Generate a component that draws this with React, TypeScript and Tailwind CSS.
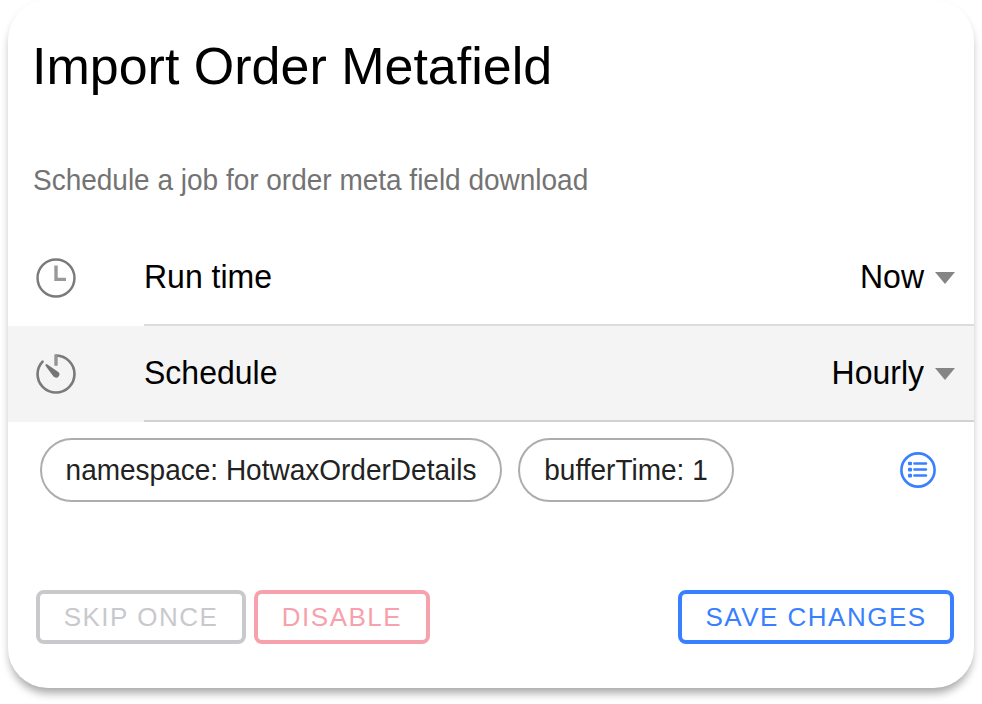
import React from "react";

function ClockIcon() {
  return (
    <svg viewBox="0 0 512 512" className="block h-12 w-12" fill="none" stroke="#7a7a7a" strokeWidth="26">
      <circle cx="256" cy="256" r="197" />
      <path d="M256 122v149h106" stroke="#999999" strokeWidth="36" />
    </svg>
  );
}

function TimerIcon() {
  return (
    <svg viewBox="0 0 512 512" className="block h-12 w-12" fill="none" stroke="#7a7a7a" strokeWidth="28" strokeLinecap="round" strokeLinejoin="round">
      <path d="M112.91 124A197 197 0 0059 256c0 109 88 197 197 197s197-88 197-197c0-107-86-194-193-197H256" />
      <path d="M256 50v118" stroke="#949494" strokeWidth="36" strokeLinecap="butt" />
      <path fill="#757575" stroke="none" d="M229 282L144 167a12 12 0 0116-16l117 81a32.5 32.5 0 01-39 56 33 33 0 01-9-6z" />
    </svg>
  );
}

function ListCircleIcon() {
  return (
    <svg viewBox="0 0 44 44" className="block h-[44px] w-[44px]" fill="none" stroke="#3880ff" strokeWidth="2.6">
      <circle cx="22" cy="22" r="16.6" />
      <path d="M18.4 15.5h11.6M18.4 21.6h11.6M18.4 27.6h11.6" strokeLinecap="round" strokeWidth="2.5" />
      <g fill="#3880ff" stroke="none">
        <rect x="12" y="13.7" width="4" height="3.6" rx="1" />
        <rect x="12" y="19.8" width="4" height="3.6" rx="1" />
        <rect x="12" y="25.8" width="4" height="3.6" rx="1" />
      </g>
    </svg>
  );
}

function Row({ icon, label, value, shaded }: { icon: React.ReactNode; label: string; value: string; shaded?: boolean }) {
  return (
    <div className={`flex h-24 pl-6 ${shaded ? "bg-[#f4f4f4]" : ""}`}>
      <div className="flex w-28 items-center">{icon}</div>
      <div className={`flex flex-1 items-center justify-between border-b-2 pb-0.5 pr-[19px] text-[32px] leading-[38px] ${shaded ? "border-[#d2d2d2]" : "border-[#dcdcdc]"}`}>
        <span className="inline-block scale-y-[1.06]">{label}</span>
        <span className="flex items-center gap-[11px]">
          <span className="inline-block scale-y-[1.06]">{value}</span>
          <svg viewBox="0 0 20 12" className="mt-1 h-3 w-5"><path d="M0 0h20L10 12z" fill="#858585" /></svg>
        </span>
      </div>
    </div>
  );
}

export default function App() {
  return (
    <main className="h-[704px] w-[982px] overflow-hidden bg-white pl-2 font-['Liberation_Sans',Arial,sans-serif] text-black">
      <section className="h-[688px] w-[966px] overflow-hidden rounded-[40px] bg-white shadow-[0_8px_10px_-3px_rgba(0,0,0,0.3),0_4px_8px_0_rgba(0,0,0,0.08)]">
        <header className="h-[230px] pl-6 pt-[35px]">
          <h1 className="text-[52px] leading-[62px]">Import Order Metafield</h1>
          <p className="mt-[66px] scale-y-[1.06] pl-px text-[28px] leading-[34px] tracking-[-0.01px] text-[#737373]">Schedule a job for order meta field download</p>
        </header>
        <Row icon={<ClockIcon />} label="Run time" value="Now" />
        <Row icon={<TimerIcon />} label="Schedule" value="Hourly" shaded />
        <div className="flex h-24 items-center pl-8 pr-[34px] text-[28px] text-[#222]">
          <span className="mr-4 flex h-16 w-[462px] items-center justify-center rounded-full border-2 border-[#adadad]">
            <span className="inline-block scale-y-[1.06]">namespace: HotwaxOrderDetails</span>
          </span>
          <span className="flex h-16 w-[216px] items-center justify-center rounded-full border-2 border-[#adadad]">
            <span className="inline-block scale-y-[1.06]">bufferTime: 1</span>
          </span>
          <span className="ml-auto"><ListCircleIcon /></span>
        </div>
        <div className="mt-[72px] flex pl-7 pr-5 text-[26px] tracking-[1.5px]">
          <button className="mr-2 h-[54px] w-[210px] rounded-lg border-4 border-[#c8c9cd] text-[#c8c9cd]">SKIP ONCE</button>
          <button className="h-[54px] w-[176px] rounded-lg border-4 border-[#f7a1ac] text-[#f7a1ac]">DISABLE</button>
          <button className="ml-auto h-[54px] w-[276px] rounded-lg border-4 border-[#3880ff] text-[#3880ff]">SAVE CHANGES</button>
        </div>
      </section>
    </main>
  );
}
